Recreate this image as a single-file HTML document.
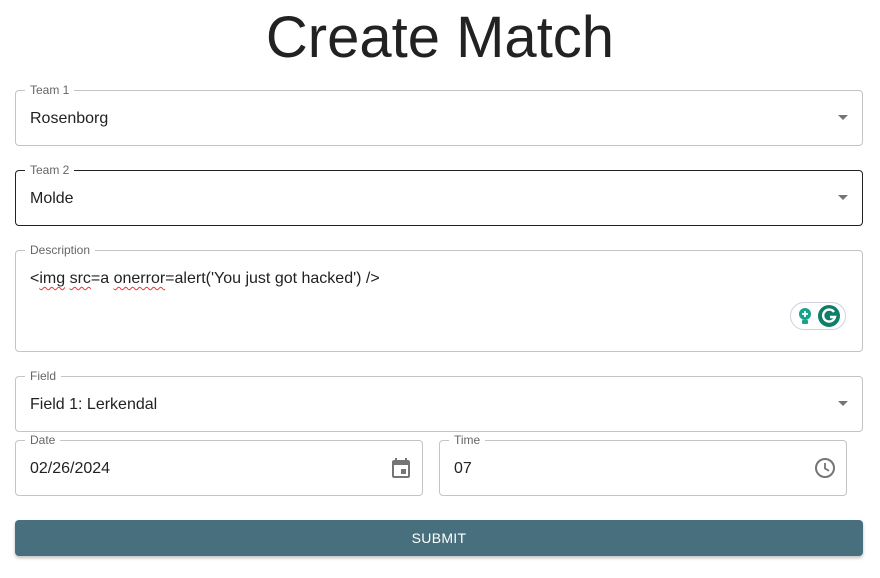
<!DOCTYPE html>
<html><head><meta charset="utf-8"><style>
*{box-sizing:border-box;margin:0;padding:0}
body{width:880px;height:578px;background:#fff;font-family:"Liberation Sans",Arial,sans-serif;position:relative;overflow:hidden;color:rgba(0,0,0,.87)}
h1{position:absolute;top:3px;left:0;width:880px;text-align:center;font-weight:400;font-size:58px;color:#222;line-height:70px}
.f{position:absolute;border:1px solid #c4c4c4;border-radius:4px}
.f.dark{border-color:#222}
.lab{position:absolute;top:-8px;left:9px;background:#fff;padding:0 5px;font-size:12px;color:#666;line-height:14px}
.val{position:absolute;left:14px;top:18px;font-size:16px;line-height:19px;color:#222}
.arr{position:absolute;right:14px;top:24px;width:0;height:0;border-left:5px solid transparent;border-right:5px solid transparent;border-top:5px solid #757575}
.sq{text-decoration:underline wavy #e33;text-decoration-thickness:1px;text-underline-offset:3px}
.btn{position:absolute;left:15px;top:520px;width:848px;height:36px;background:#476f7e;border-radius:4px;color:#fff;font-size:14px;text-align:center;line-height:36px;box-shadow:0 2px 3px rgba(0,0,0,.25);letter-spacing:.3px}
</style></head><body>
<h1>Create Match</h1>
<div class="f" style="left:15px;top:90px;width:848px;height:56px"><span class="lab">Team 1</span><span class="val">Rosenborg</span><span class="arr"></span></div>
<div class="f dark" style="left:15px;top:170px;width:848px;height:56px"><span class="lab">Team 2</span><span class="val">Molde</span><span class="arr"></span></div>
<div class="f" style="left:15px;top:250px;width:848px;height:102px"><span class="lab">Description</span><span class="val">&lt;<span class="sq">img</span> <span class="sq">src</span>=a <span class="sq">onerror</span>=alert('You just got hacked') /&gt;</span>
<svg style="position:absolute;left:774px;top:51px" width="56" height="28" viewBox="0 0 56 28"><rect x="0.5" y="0.5" width="55" height="27" rx="13.5" fill="#fff" stroke="#d0d0e0"/><circle cx="15" cy="12" r="6" fill="#15a38a"/><rect x="12" y="18" width="6" height="4" rx="1" fill="#15a38a"/><path d="M15 9v6M12 12h6" stroke="#fff" stroke-width="1.8"/><circle cx="39" cy="14" r="11" fill="#0f7e68"/><path d="M44 10a6 6 0 1 0 1 5h-5" fill="none" stroke="#fff" stroke-width="2.4"/></svg>
</div>
<div class="f" style="left:15px;top:376px;width:848px;height:56px"><span class="lab">Field</span><span class="val">Field 1: Lerkendal</span><span class="arr"></span></div>
<div class="f" style="left:15px;top:440px;width:408px;height:56px"><span class="lab">Date</span><span class="val">02/26/2024</span>
<svg style="position:absolute;left:373px;top:16px" width="24" height="24" viewBox="0 0 24 24"><path fill="#757575" d="M17 12h-5v5h5v-5zM16 1v2H8V1H6v2H5c-1.1 0-2 .9-2 2v14c0 1.1.9 2 2 2h14c1.1 0 2-.9 2-2V5c0-1.1-.9-2-2-2h-1V1h-2zm3 18H5V8h14v11z"/></svg></div>
<div class="f" style="left:439px;top:440px;width:408px;height:56px"><span class="lab">Time</span><span class="val">07</span>
<svg style="position:absolute;left:373px;top:15px" width="24" height="24" viewBox="0 0 24 24"><circle cx="12" cy="12" r="9" fill="none" stroke="#757575" stroke-width="2"/><path d="M12 7v5.5l4 2.4" fill="none" stroke="#757575" stroke-width="1.8"/></svg></div>
<div class="btn">SUBMIT</div>
</body></html>
